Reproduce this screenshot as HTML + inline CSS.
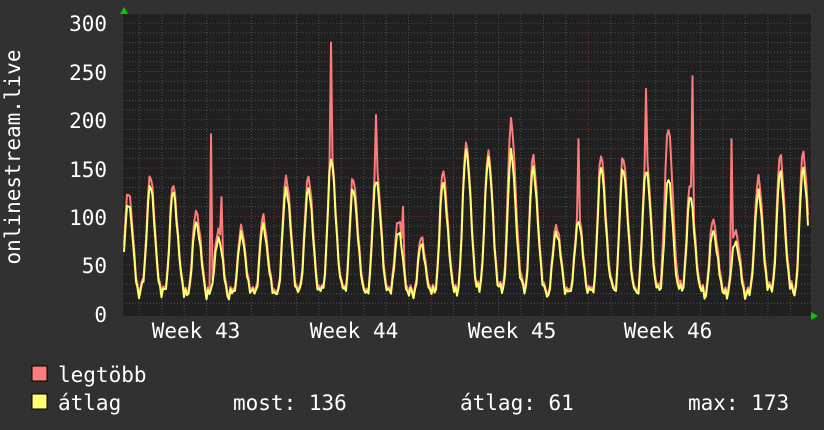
<!DOCTYPE html><html><head><meta charset="utf-8"><style>
body{margin:0;background:#313131;width:824px;height:430px;overflow:hidden;font-family:"DejaVu Sans Mono","Liberation Mono",monospace;}
svg{display:block}
text{font-family:"DejaVu Sans Mono","Liberation Mono",monospace;fill:#fff;font-size:21px}
</style></head><body>
<svg id="s" width="824" height="430" xmlns="http://www.w3.org/2000/svg">
<rect width="824" height="430" fill="#313131"/>
<rect x="123" y="14" width="688" height="302" fill="#202020"/>
<g id="grid"></g>
<path id="red" fill="none" stroke="#ff7b7b" stroke-width="2" stroke-linejoin="round"/>
<path id="yel" fill="none" stroke="#ffff70" stroke-width="2" stroke-linejoin="round"/>
<polygon points="120,14 128,14 124,7" fill="#00cc00"/>
<polygon points="811,312 811,320 818,316" fill="#00cc00"/>
<g text-anchor="end">
<text x="107" y="31">300</text><text x="107" y="80">250</text><text x="107" y="128">200</text>
<text x="107" y="177">150</text><text x="107" y="225">100</text><text x="107" y="273">50</text><text x="107" y="322">0</text>
</g>
<g text-anchor="middle">
<text x="196" y="338">Week 43</text><text x="354" y="338">Week 44</text><text x="512" y="338">Week 45</text><text x="668" y="338">Week 46</text>
</g>
<text transform="translate(20,157) rotate(-90)" text-anchor="middle">onlinestream.live</text>
<rect x="32" y="366" width="15" height="15" fill="#ff7b7b" stroke="#000" stroke-width="1"/>
<rect x="32" y="394" width="15" height="15" fill="#ffff70" stroke="#000" stroke-width="1"/>
<text x="58" y="382">legtöbb</text>
<text x="58" y="410">átlag</text>
<text x="233" y="410">most: 136</text>
<text x="460" y="410">átlag: 61</text>
<text x="688" y="410">max: 173</text>
</svg>
<script>
var g=document.getElementById('grid'),h='';
var y0=313,k=48.3/50;
for(var v=10;v<=300;v+=10){var y=(y0-v*k).toFixed(1);var maj=v%50==0;
h+='<line x1="123" x2="811" y1="'+y+'" y2="'+y+'" stroke="'+(maj?'#7a3434':'#505050')+'" stroke-dasharray="1,2"/>';}
for(var x=139.3;x<811;x+=22.45){var m=Math.abs(((x-274)/157)-Math.round((x-274)/157))<0.02;
h+='<line x1="'+x.toFixed(1)+'" x2="'+x.toFixed(1)+'" y1="14" y2="316" stroke="'+(m?'#7a3434':'#505050')+'" stroke-dasharray="1,2"/>';}
g.innerHTML=h;
var peaks=[[128,115,125],[150,132,140],[173,125,130],[196,95,105],[218,78,85],[241,80,85],[263,90,97],[286,130,140],[308,130,140],[331,158,162],[353,128,137],[376,140,150],[398,85,95],[421,70,75],[443,135,145],[466,170,175],[488,160,165],[511,165,195],[533,150,160],[556,85,90],[578,95,100],[601,150,160],[623,150,160],[646,150,160],[668,140,190],[690,120,130],[713,85,95],[735,75,85],[758,125,138],[780,145,160],[803,150,165]];
var spikes=[[211,185],[221,120],[331,280],[376,205],[403,110],[578,180],[646,232],[668,170],[692,245],[731,180]];
function val(x,w){
var s=10;for(var i=0;i<peaks.length;i++){var d=(x-peaks[i][0])/4.6;var b=Math.exp(-d*d*(d<0?0.9:0.45));s=Math.max(s,10+(peaks[i][w]-10)*b);}
var dx=x-Math.round((x-128)/22.45)*22.45-128; if(Math.abs(dx+9)<3) s+=12*(1-Math.abs(dx+9)/3);
s+=Math.sin(x*1.7)*3+Math.sin(x*0.63)*2; return Math.max(10,s);}
var r='',yy='';
for(var x=124;x<=808;x+=1.5){var a=val(x,1),b=val(x,2)+2;
for(var j=0;j<spikes.length;j++){if(Math.abs(x-spikes[j][0])<0.8)b=Math.max(b,spikes[j][1]);}
r+=(x==124?'M':'L')+x+','+(y0-b*k).toFixed(1);yy+=(x==124?'M':'L')+x+','+(y0-a*k).toFixed(1);}
document.getElementById('red').setAttribute('d',r);document.getElementById('yel').setAttribute('d',yy);
</script>
</body></html>
